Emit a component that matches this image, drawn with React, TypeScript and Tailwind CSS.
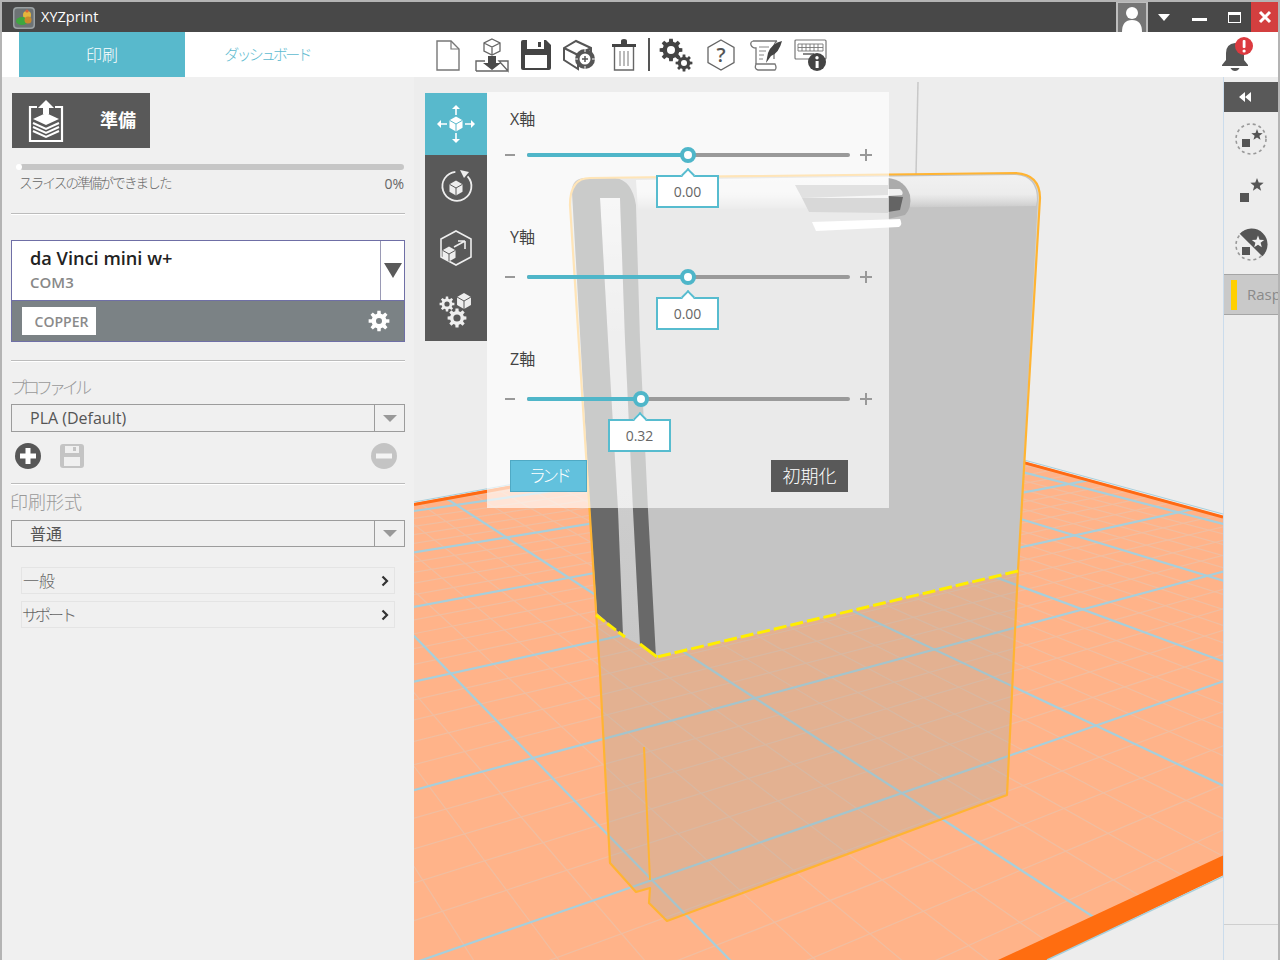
import React from "react";

const G = { a: 311, b: 0.7, c: 533, d: 22.4, e: -37.6, f: 758, g: 0.118, h: -0.1814 };
function proj(u: number, v: number): [number, number] {
  const w = 1 + G.g * u + G.h * v;
  return [(G.a * u + G.b * v + G.c) / w, (G.d * u + G.e * v + G.f) / w];
}

function gearPath(cx: number, cy: number, R: number, r: number, hole: number, n: number) {
  const pts: string[] = [];
  const step = (Math.PI * 2) / n;
  for (let i = 0; i < n; i++) {
    const t = i * step;
    const seq: [number, number][] = [
      [r, t - step * 0.32],
      [R, t - step * 0.2],
      [R, t + step * 0.2],
      [r, t + step * 0.32],
    ];
    seq.forEach(([q, a]) => pts.push(`${(cx + q * Math.cos(a)).toFixed(2)},${(cy + q * Math.sin(a)).toFixed(2)}`));
  }
  const ring = `M${pts.join("L")}Z`;
  const h = `M${cx - hole},${cy}a${hole},${hole} 0 1,0 ${hole * 2},0a${hole},${hole} 0 1,0 ${-hole * 2},0Z`;
  return ring + h;
}

function starPoints(cx: number, cy: number, R: number) {
  const p: string[] = [];
  for (let i = 0; i < 10; i++) {
    const q = i % 2 === 0 ? R : R * 0.42;
    const a = -Math.PI / 2 + (i * Math.PI) / 5;
    p.push(`${(cx + q * Math.cos(a)).toFixed(2)},${(cy + q * Math.sin(a)).toFixed(2)}`);
  }
  return p.join(" ");
}

function Cube({ x, y, s, fill, line }: { x: number; y: number; s: number; fill: string; line: string }) {
  const w = s * 0.87;
  const h = s * 0.5;
  return (
    <g>
      <polygon points={`${x},${y - s} ${x + w},${y - h} ${x + w},${y + h} ${x},${y + s} ${x - w},${y + h} ${x - w},${y - h}`} fill={fill} />
      <path d={`M${x - w},${y - h}L${x},${y}L${x + w},${y - h}M${x},${y}V${y + s}`} stroke={line} strokeWidth={1} fill="none" />
    </g>
  );
}

function FileIcon() {
  return (
    <svg width="28" height="34" viewBox="0 0 28 34">
      <path d="M3 3H17L25 11V32H3Z" fill="#fff" stroke="#777" strokeWidth="1.4" />
      <path d="M17 3V11H25" fill="none" stroke="#777" strokeWidth="1.2" />
    </svg>
  );
}
function ImportIcon() {
  return (
    <svg width="36" height="36" viewBox="0 0 36 36">
      <path d="M18 2L26 6V14L18 18L10 14V6Z M10 6L18 10L26 6 M18 10V18" fill="none" stroke="#666" strokeWidth="1.3" />
      <path d="M2 34V24H11 M25 24H34V34Z M2 34H34" fill="none" stroke="#666" strokeWidth="1.4" />
      <path d="M14 19H22V26H27L18 33L9 26H14Z" fill="#4a4a4a" />
    </svg>
  );
}
function SaveIcon() {
  return (
    <svg width="32" height="32" viewBox="0 0 32 32">
      <path d="M1 3Q1 1 3 1H26L31 6V29Q31 31 29 31H3Q1 31 1 29Z" fill="#444" />
      <rect x="7" y="1" width="17" height="9" fill="#fff" />
      <rect x="18" y="3" width="3" height="5" fill="#444" />
      <rect x="5" y="16" width="22" height="13" fill="#fff" />
    </svg>
  );
}
function CubeTargetIcon() {
  return (
    <svg width="34" height="32" viewBox="0 0 34 32">
      <path d="M1 9L13 2L28 9V14L15 21V30L1 21Z M1 9L15 16L28 9 M15 16V30" fill="#fff" stroke="#555" strokeWidth="2" />
      <circle cx="22" cy="20" r="10" fill="#555" />
      <circle cx="22" cy="20" r="5.5" fill="#fff" />
      <path d="M22 17V23M19 20H25" stroke="#555" strokeWidth="1.5" />
      <path d="M22 9V13M22 27V31M11 20H15M29 20H33" stroke="#fff" strokeWidth="1" />
    </svg>
  );
}
function TrashIcon() {
  return (
    <svg width="26" height="34" viewBox="0 0 26 34">
      <path d="M1 6H25V9H1Z M10 6V3Q10 1 13 1Q16 1 16 3V6Z" fill="#444" />
      <path d="M3.5 9V32H22.5V9" fill="none" stroke="#666" strokeWidth="1.4" />
      <path d="M9 13V28M13 13V28M17 13V28" stroke="#777" strokeWidth="1" />
    </svg>
  );
}
function GearsIcon() {
  return (
    <svg width="34" height="34" viewBox="0 0 34 34">
      <path d={gearPath(12, 12, 11.5, 8.5, 4, 8)} fill="#444" fillRule="evenodd" />
      <path d={gearPath(25, 25, 8.5, 6.2, 3, 8)} fill="#444" fillRule="evenodd" />
    </svg>
  );
}
function HelpIcon() {
  return (
    <svg width="30" height="34" viewBox="0 0 30 34">
      <polygon points="15,2 28,9.5 28,24.5 15,32 2,24.5 2,9.5" fill="#fff" stroke="#666" strokeWidth="1.3" />
      <text x="15" y="24" textAnchor="middle" fontSize="20" fontWeight="600" fill="#555" fontFamily="Open Sans">?</text>
    </svg>
  );
}
function ScrollIcon() {
  return (
    <svg width="34" height="32" viewBox="0 0 34 32">
      <path d="M4 2H28M4 2Q1 3 2 6Q3 9 7 9V25M28 2Q25 4 25 8V20" fill="none" stroke="#777" strokeWidth="1.3" />
      <path d="M10 8H20M10 12H17M10 16H15M10 20H14" stroke="#888" strokeWidth="1" />
      <path d="M7 25H26Q28 29 26 31H9Q5 30 7 25Z" fill="#fff" stroke="#777" strokeWidth="1.3" />
      <path d="M33 2Q23 4 19 14L17 24L22 17Q30 14 33 2Z" fill="#444" />
    </svg>
  );
}
function KeyboardInfoIcon() {
  return (
    <svg width="34" height="34" viewBox="0 0 34 34">
      <rect x="1" y="2" width="31" height="19" rx="1" fill="#fff" stroke="#777" strokeWidth="1.2" />
      <path d="M4 6H29V13H4Z M4 9.5H29 M8 6V13 M12 6V13 M16 6V13 M20 6V13 M24 6V13" fill="none" stroke="#777" strokeWidth="0.9" />
      <path d="M9 16H20" stroke="#888" strokeWidth="2" />
      <circle cx="23" cy="24" r="9" fill="#444" />
      <rect x="21.6" y="23" width="3" height="7" fill="#fff" />
      <circle cx="23" cy="19.8" r="1.7" fill="#fff" />
    </svg>
  );
}
function BellIcon() {
  return (
    <svg width="36" height="36" viewBox="0 0 36 36">
      <path d="M16 6Q7 7 7 16V23L3 28V29H29V28L25 23V16Q25 7 16 6Z" fill="#555" />
      <path d="M11.5 31H20.5Q19 34 16 34Q13 34 11.5 31Z" fill="#555" />
      <circle cx="25" cy="9" r="9" fill="#dc3a3f" />
      <rect x="23.7" y="3" width="2.8" height="8" rx="1" fill="#fff" />
      <circle cx="25.1" cy="14" r="1.6" fill="#fff" />
    </svg>
  );
}
function AppIcon() {
  return (
    <svg width="24" height="24" viewBox="0 0 24 24">
      <rect x="1" y="1" width="22" height="22" rx="4" fill="#9ba1a3" />
      <rect x="2.5" y="2.5" width="19" height="19" rx="3" fill="#6d7375" />
      <circle cx="15" cy="9" r="4" fill="#e5b53c" />
      <ellipse cx="10" cy="15" rx="6" ry="4" fill="#3ea63f" />
      <circle cx="16" cy="14" r="3.5" fill="#c98a2b" />
      <circle cx="15" cy="5" r="1.6" fill="#d9603a" />
    </svg>
  );
}
function UserGlyph() {
  return (
    <svg width="28" height="28" viewBox="0 0 28 28">
      <circle cx="14" cy="9" r="6" fill="#fff" />
      <path d="M4 28Q4 16 14 16Q24 16 24 28Z" fill="#fff" />
    </svg>
  );
}
function PrepareIcon() {
  return (
    <svg width="36" height="42" viewBox="0 0 36 42">
      <path d="M9 7H2V41H34V7H27" fill="none" stroke="#fff" strokeWidth="2.2" />
      <path d="M18 0L26 8H21V14H15V8H10Z" fill="#fff" />
      <path d="M18 13L31 19L18 25L5 19Z" fill="#fff" />
      <path d="M5 23L18 29L31 23M5 27L18 33L31 27M5 31L18 37L31 31" fill="none" stroke="#fff" strokeWidth="2" />
    </svg>
  );
}
function MoveIcon() {
  return (
    <svg width="40" height="40" viewBox="0 0 40 40">
      <Cube x={20} y={20} s={7.5} fill="#fff" line="#58b9cc" />
      <path d="M20 11V3M20 29V37M11 20H3M29 20H37" stroke="#fff" strokeWidth="1.6" />
      <path d="M16 5L20 1L24 5ZM16 35L20 39L24 35ZM5 16L1 20L5 24ZM35 16L39 20L35 24Z" fill="#fff" />
    </svg>
  );
}
function RotateIcon() {
  return (
    <svg width="36" height="36" viewBox="0 0 36 36">
      <path d="M24 4.5A14.5 14.5 0 1 1 11 5.5" fill="none" stroke="#eee" strokeWidth="1.8" transform="rotate(25 18 19)" />
      <path d="M22 2L31 4L26 10Z" fill="#eee" />
      <Cube x={18} y={20} s={7.5} fill="#eee" line="#595959" />
    </svg>
  );
}
function ScaleIcon() {
  return (
    <svg width="36" height="38" viewBox="0 0 36 38">
      <polygon points="18,2 33,10 33,28 18,36 3,28 3,10" fill="none" stroke="#eee" strokeWidth="1.6" />
      <Cube x={11} y={25} s={7.5} fill="#eee" line="#595959" />
      <path d="M16 18L27 12M27 12V20M27 12H20" fill="none" stroke="#eee" strokeWidth="1.6" />
    </svg>
  );
}
function GearCubeIcon() {
  return (
    <svg width="34" height="36" viewBox="0 0 34 36">
      <path d={gearPath(8, 12, 7.5, 5.5, 2.6, 8)} fill="#eee" fillRule="evenodd" />
      <path d={gearPath(18, 26, 9.5, 7, 3.6, 8)} fill="#eee" fillRule="evenodd" />
      <Cube x={25} y={9} s={8} fill="#eee" line="#595959" />
    </svg>
  );
}

function Track({ pos, label, value, gapClass, boxLeft }: { pos: number; label: string; value: string; gapClass: string; boxLeft: number }) {
  return (
    <div>
      <div className="h-6 ml-[5px] text-[16px] leading-6 text-[#444]">{label}</div>
      <div className={`flex items-center h-4 ${gapClass}`}>
        <div className="w-[10px] h-[2px] bg-[#999]" />
        <div className="relative ml-[12px] w-[323px] h-1 rounded-full bg-[#9a9a9a]">
          <div className="h-1 rounded-full bg-[#4fb6c9]" style={{ width: pos }} />
          <div className="absolute top-[-6px] w-4 h-4 rounded-full bg-white border-[4px] border-[#4fb6c9]" style={{ left: pos - 8 }} />
        </div>
        <div className="relative ml-[10px] w-3 h-3">
          <div className="absolute left-0 top-[5px] w-3 h-[2px] bg-[#999]" />
          <div className="absolute left-[5px] top-0 w-[2px] h-3 bg-[#999]" />
        </div>
      </div>
      <div className="relative mt-3 w-[63px] h-[33px] bg-white border-2 border-[#57bccf] flex items-center justify-center text-[14px] text-[#666]" style={{ marginLeft: boxLeft }}>
        <div className="absolute top-[-7px] left-[25px] w-[10px] h-[10px] rotate-45 bg-white border-l-2 border-t-2 border-[#57bccf]" />
        <span className="relative">{value}</span>
      </div>
    </div>
  );
}

function Divider({ className }: { className: string }) {
  return <div className={`ml-[9px] w-[394px] h-[2px] bg-[#bcbcbc] border-b border-white ${className}`} />;
}

function SelectBox({ text, className }: { text: string; className: string }) {
  return (
    <div className={`ml-[9px] w-[394px] flex border border-[#9c9c9c] ${className}`}>
      <div className="flex-1 pl-[18px] text-[16px] text-[#555] flex items-center">{text}</div>
      <div className="w-[30px] border-l border-[#9c9c9c] flex items-center justify-center">
        <div className="w-0 h-0 border-x-[7px] border-x-transparent border-t-[7px] border-t-[#999]" />
      </div>
    </div>
  );
}

function AccordionRow({ text, className, textClass }: { text: string; className: string; textClass: string }) {
  return (
    <div className={`ml-[19px] w-[374px] h-[27px] flex items-center justify-between border border-[#e4e4e4] pr-[5px] text-[16px] font-light text-[#666] ${className}`}>
      <span className={textClass}>{text}</span>
      <svg width="8" height="12" viewBox="0 0 8 12">
        <path d="M1.5 1.5L6 6L1.5 10.5" fill="none" stroke="#333" strokeWidth="2.2" />
      </svg>
    </div>
  );
}

function Scene() {
  const minors: React.ReactNode[] = [];
  const majors: React.ReactNode[] = [];
  for (let i = -10; i <= 40; i++) {
    const u = i / 5;
    const a = proj(u, -8);
    const b = proj(u, 3);
    const el = <line key={`u${i}`} x1={a[0]} y1={a[1]} x2={b[0]} y2={b[1]} />;
    (i % 5 === 0 ? majors : minors).push(el);
  }
  for (let i = -40; i <= 15; i++) {
    const v = i / 5;
    const a = proj(-2, v);
    const b = proj(8, v);
    const el = <line key={`v${i}`} x1={a[0]} y1={a[1]} x2={b[0]} y2={b[1]} />;
    (i % 5 === 0 ? majors : minors).push(el);
  }
  const outline = "M570,205 Q570,178 590,178 L1015,173 Q1040,174 1040,198 L1018,570 L1007,795 L667,921 L649,903 L650,888 L636,892 L610,863 L600,673 Z";
  return (
    <svg className="absolute inset-0" width="809" height="883" viewBox="414 77 809 883">
      <defs>
        <clipPath id="floor">
          <polygon points="414,503 873,420 1223,516 1223,875 1047,960 414,960" />
        </clipPath>
        <linearGradient id="band" x1="0" y1="0" x2="0" y2="1">
          <stop offset="0" stopColor="#f1f1f1" />
          <stop offset="0.55" stopColor="#ececec" />
          <stop offset="0.75" stopColor="#dcdcdc" />
          <stop offset="1" stopColor="#c4c4c4" />
        </linearGradient>
        <linearGradient id="gap" x1="0" y1="0" x2="0" y2="1">
          <stop offset="0" stopColor="#e8e8e8" />
          <stop offset="0.3" stopColor="#d2d2d2" />
          <stop offset="1" stopColor="#c8c8c8" />
        </linearGradient>
      </defs>
      <rect x="414" y="77" width="809" height="883" fill="#ededed" />
      <path d="M918,82L916,175" stroke="#c8c8c8" strokeWidth="1.5" />
      <polygon points="414,503 873,420 1223,516 1223,875 1047,960 414,960" fill="#ffb389" />
      <g clipPath="url(#floor)">
        <g stroke="#f0bea1" strokeWidth="1.2">{minors}</g>
        <g stroke="#a6cfdc" strokeWidth="2.2">{majors}</g>
      </g>
      <polygon points="1224,855 998,960 1047,960 1224,875" fill="#ff6d10" />
      <path d="M1047,960L1224,876" stroke="#a6cfdc" strokeWidth="1.5" />
      <path d="M414,504.5L873,421.5L1223,517" fill="none" stroke="#ff6a13" strokeWidth="3" />
      <path d="M414,502L873,419L1223,514" fill="none" stroke="#a6cfdc" strokeWidth="1" />
      <path d={outline} fill="#a1ada6" fillOpacity="0.3" />
      <path d="M572,190 Q572,178 586,178 L1015,174 Q1038,175 1038,198 L1018,571 L656,658 L640,645 L625,637 L597,613 Z" fill="#c4c4c4" />
      <path d="M636,180 L1015,175 Q1037,176 1037,200 L1036,206 L638,210 Z" fill="url(#band)" />
      <path d="M600,198 L620,198 L625,340 L633,510 L640,645 L623,636 L618,510 L608,340 Z" fill="url(#gap)" />
      <path d="M572,192 Q572,178 586,178 L615,178 Q632,180 636,205 L640,340 L648,510 L656,658 L640,645 L633,510 L625,340 L620,198 L600,198 L608,340 L618,510 L623,636 L597,613 L590,510 Z" fill="#696969" />
      <path d="M795,185H888V195L802,198Z" fill="#a8a8a8" />
      <path d="M802,198H888V213L809,212Z" fill="#8f8f8f" />
      <path d="M812,222L900,219Q903,224 899,227L816,231Z" fill="#fff" />
      <path d="M888,178Q905,180 910,195Q912,208 905,215L888,219Z" fill="#ababab" />
      <path d="M888,189H900Q904,192 902,195L888,196Z" fill="#f0f0f0" />
      <path d="M888,196L903,197L900,210L888,212Z" fill="#646464" />
      <path d={outline} fill="none" stroke="#ffb433" strokeWidth="2.2" strokeLinejoin="round" />
      <path d="M644,747L650,880" fill="none" stroke="#ffb433" strokeWidth="2" />
      <path d="M1018,571L657,657" stroke="#ffee00" strokeWidth="3" strokeDasharray="13 4" />
      <path d="M657,657L640,644" stroke="#ffee00" strokeWidth="3" />
      <path d="M596,615L625,637" stroke="#ffee00" strokeWidth="3" strokeDasharray="11 3" />
    </svg>
  );
}

export default function App() {
  return (
    <div className="w-[1280px] h-[960px] flex flex-col overflow-hidden box-border border-x-2 border-t-2 border-[#b4b4b4] font-['Open_Sans','Noto_Sans_CJK_JP',sans-serif]">
      <header className="h-[30px] shrink-0 flex items-center bg-[#484848] text-white">
        <div className="ml-[10px] mt-[1px] flex items-center">
          <AppIcon />
        </div>
        <span className="ml-[5px] text-[14.5px]">XYZprint</span>
        <div className="ml-auto self-stretch w-[32px] bg-[#757575] border-x-2 border-t border-[#bdbdbd] flex items-end justify-center">
          <UserGlyph />
        </div>
        <div className="ml-[10px] w-0 h-0 border-x-[6px] border-x-transparent border-t-[7px] border-t-white" />
        <div className="ml-[22px] w-[15px] h-[3px] bg-white mt-[5px]" />
        <div className="ml-[21px] w-[13px] h-[11px] border border-white border-t-[3px]" />
        <div className="ml-[10px] self-stretch w-[27px] bg-[#d33f3f] flex items-center justify-center">
          <svg width="14" height="14" viewBox="0 0 14 14">
            <path d="M2 2L12 12M12 2L2 12" stroke="#fff" strokeWidth="3" />
          </svg>
        </div>
      </header>

      <nav className="h-[45px] shrink-0 flex items-center bg-white">
        <div className="ml-[17px] w-[166px] self-stretch bg-[#58b9cc] flex items-center justify-center text-[16px] font-light text-white">印刷</div>
        <div className="w-[164px] text-center text-[15px] font-light tracking-[-2.8px] text-[#5ebbd0]">ダッシュボード</div>
        <div className="ml-[77px] flex items-center">
          <div className="w-11 flex justify-center"><FileIcon /></div>
          <div className="w-11 flex justify-center"><ImportIcon /></div>
          <div className="w-11 flex justify-center"><SaveIcon /></div>
          <div className="w-11 flex justify-center"><CubeTargetIcon /></div>
          <div className="w-11 flex justify-center"><TrashIcon /></div>
          <div className="ml-[2px] w-[2px] h-[33px] bg-[#555]" />
          <div className="ml-[3px] w-[45px] flex justify-center"><GearsIcon /></div>
          <div className="w-[45px] flex justify-center"><HelpIcon /></div>
          <div className="w-[45px] flex justify-center"><ScrollIcon /></div>
          <div className="w-[45px] flex justify-center"><KeyboardInfoIcon /></div>
        </div>
        <div className="ml-auto mr-[21px] w-10 flex justify-center"><BellIcon /></div>
      </nav>

      <div className="flex-1 flex min-h-0">
        <aside className="w-[412px] shrink-0 flex flex-col bg-[#f0f0f0]">
          <div className="ml-[10px] mt-4 w-[138px] h-[55px] bg-[#595959] flex items-center text-white">
            <div className="ml-[15px] w-[38px] flex justify-center"><PrepareIcon /></div>
            <span className="ml-[35px] text-[18px] font-bold">準備</span>
          </div>
          <div className="relative ml-[18px] mt-4 w-[384px] h-[6px] rounded-full bg-[#c6c6c6]">
            <div className="absolute left-[-4px] top-0 w-[6px] h-[6px] rounded-full bg-white" />
          </div>
          <div className="ml-[17px] mt-[3px] w-[385px] h-5 flex items-center justify-between text-[13.5px] text-[#666]">
            <span className="font-light tracking-[-1.8px]">スライスの準備ができました</span>
            <span className="text-[14px]">0%</span>
          </div>
          <Divider className="mt-5" />

          <div className="ml-[9px] mt-[25px] w-[394px] h-[102px] flex flex-col border border-[#6f6fa6]">
            <div className="h-[60px] flex bg-white border-b border-[#6f6fa6]">
              <div className="flex-1 pl-[18px] pt-[5px] flex flex-col">
                <span className="text-[18.2px] leading-[24px] font-semibold text-[#222]">da Vinci mini w+</span>
                <span className="mt-[2px] text-[15px] leading-[20px] font-semibold text-[#888]">COM3</span>
              </div>
              <div className="w-[24px] border-l border-[#9a9ab5] flex items-center justify-center">
                <div className="w-0 h-0 border-x-[9px] border-x-transparent border-t-[15px] border-t-[#5a5a5a]" />
              </div>
            </div>
            <div className="flex-1 flex items-center justify-between bg-[#7b8285] pl-[10px] pr-[14px]">
              <div className="w-[74px] h-7 pl-[5px] bg-white flex items-center justify-center text-[14px] font-semibold text-[#8a8a8a]">COPPER</div>
              <svg width="22" height="22" viewBox="0 0 22 22">
                <path d={gearPath(11, 11, 10.5, 7.5, 3, 8)} fill="#fff" fillRule="evenodd" />
              </svg>
            </div>
          </div>
          <Divider className="mt-[18px]" />

          <div className="ml-2 mt-[14px] h-6 text-[17px] leading-6 font-light tracking-[-4px] text-[#999]">プロファイル</div>
          <SelectBox text="PLA (Default)" className="mt-1 h-7" />
          <div className="ml-3 mt-[10px] w-[384px] h-7 flex items-center">
            <svg width="28" height="28" viewBox="0 0 28 28">
              <circle cx="14" cy="14" r="13" fill="#575757" />
              <path d="M14 6V22M6 14H22" stroke="#fff" strokeWidth="5" />
            </svg>
            <svg className="ml-4" width="28" height="28" viewBox="0 0 28 28">
              <rect x="2" y="2" width="24" height="24" rx="3" fill="#c4c4c4" />
              <rect x="7" y="4" width="14" height="7" fill="#f0f0f0" />
              <rect x="15" y="5" width="3" height="4" fill="#c4c4c4" />
              <rect x="6" y="15" width="16" height="9" fill="#f0f0f0" />
            </svg>
            <svg className="ml-auto" width="28" height="28" viewBox="0 0 28 28">
              <circle cx="14" cy="14" r="13" fill="#c4c4c4" />
              <path d="M6 14H22" stroke="#f4f4f4" strokeWidth="5" />
            </svg>
          </div>
          <Divider className="mt-[13px]" />

          <div className="ml-2 mt-[5px] h-6 text-[18px] leading-6 font-light text-[#999]">印刷形式</div>
          <SelectBox text="普通" className="mt-[6px] h-[27px]" />
          <AccordionRow text="一般" className="mt-5" textClass="ml-px" />
          <AccordionRow text="サポート" className="mt-[7px]" textClass="tracking-[-3px]" />
        </aside>

        <main className="relative flex-1 overflow-hidden">
          <Scene />
          <div className="absolute left-[11px] top-[15px] flex items-start">
            <div className="mt-px w-[62px] flex flex-col bg-[#595959]">
              <div className="h-[62px] bg-[#58b9cc] flex items-center justify-center"><MoveIcon /></div>
              <div className="h-[62px] flex items-center justify-center"><RotateIcon /></div>
              <div className="h-[62px] flex items-center justify-center"><ScaleIcon /></div>
              <div className="h-[62px] flex items-center justify-center"><GearCubeIcon /></div>
            </div>
            <div className="w-[402px] h-[416px] bg-white/65 pl-[18px] pt-[15px] flex flex-col">
              <Track label="X軸" value="0.00" pos={161} boxLeft={151} gapClass="mt-4" />
              <div className="mt-[17px]">
                <Track label="Y軸" value="0.00" pos={161} boxLeft={151} gapClass="mt-5" />
              </div>
              <div className="mt-[17px]">
                <Track label="Z軸" value="0.32" pos={114} boxLeft={103} gapClass="mt-5" />
              </div>
              <div className="mt-2 pl-[5px] w-[343px] flex justify-between">
                <div className="w-[77px] h-8 bg-[#62c1dd] border border-[#4fa9c4] flex items-center justify-center text-[17px] font-light tracking-[-4px] text-white">ランド</div>
                <div className="w-[77px] h-8 bg-[#595959] flex items-center justify-center text-[18px] font-light text-white">初期化</div>
              </div>
            </div>
          </div>
        </main>

        <aside className="w-[55px] shrink-0 flex flex-col bg-[#ededed] border-l border-[#cbdcec] pt-[5px]">
          <div className="h-[30px] bg-[#595959] flex items-center pl-[14px]">
            <svg width="14" height="12" viewBox="0 0 14 12">
              <path d="M7 1V11L1 6ZM13 1V11L7 6Z" fill="#fff" />
            </svg>
          </div>
          <div className="mt-px h-[52px] flex items-center justify-center">
            <svg width="34" height="34" viewBox="0 0 34 34">
              <circle cx="17" cy="17" r="15" fill="none" stroke="#999" strokeWidth="1.6" strokeDasharray="3 3" />
              <polygon points={starPoints(23, 13, 6)} fill="#555" />
              <rect x="8" y="17" width="8" height="8" fill="#555" />
            </svg>
          </div>
          <div className="h-[52px] flex items-center justify-center">
            <svg width="30" height="28" viewBox="0 0 30 28">
              <polygon points={starPoints(21, 8, 7)} fill="#555" />
              <rect x="4" y="16" width="9" height="9" fill="#555" />
            </svg>
          </div>
          <div className="mt-[2px] h-[52px] flex items-center justify-center">
            <svg width="34" height="34" viewBox="0 0 34 34">
              <circle cx="17" cy="17" r="15" fill="none" stroke="#999" strokeWidth="1.6" strokeDasharray="3 3" />
              <path d="M5.7 5.7A16 16 0 1 1 28.3 28.3Z" fill="#555" />
              <polygon points={starPoints(24, 14, 6.5)} fill="#f0f0f0" />
              <rect x="8" y="19" width="8" height="8" fill="#555" />
            </svg>
          </div>
          <div className="mt-[3px] h-[41px] flex items-center overflow-hidden bg-[#c9c9c9] border-y border-[#a5a5a5]">
            <div className="ml-[7px] w-[6px] h-[30px] shrink-0 bg-[#ffd000]" />
            <span className="ml-[10px] text-[15px] text-[#8a8a8a]">Rasp</span>
          </div>
          <div className="flex-1 border-b border-[#cfcfcf]" />
          <div className="h-[35px]" />
        </aside>
      </div>
    </div>
  );
}
